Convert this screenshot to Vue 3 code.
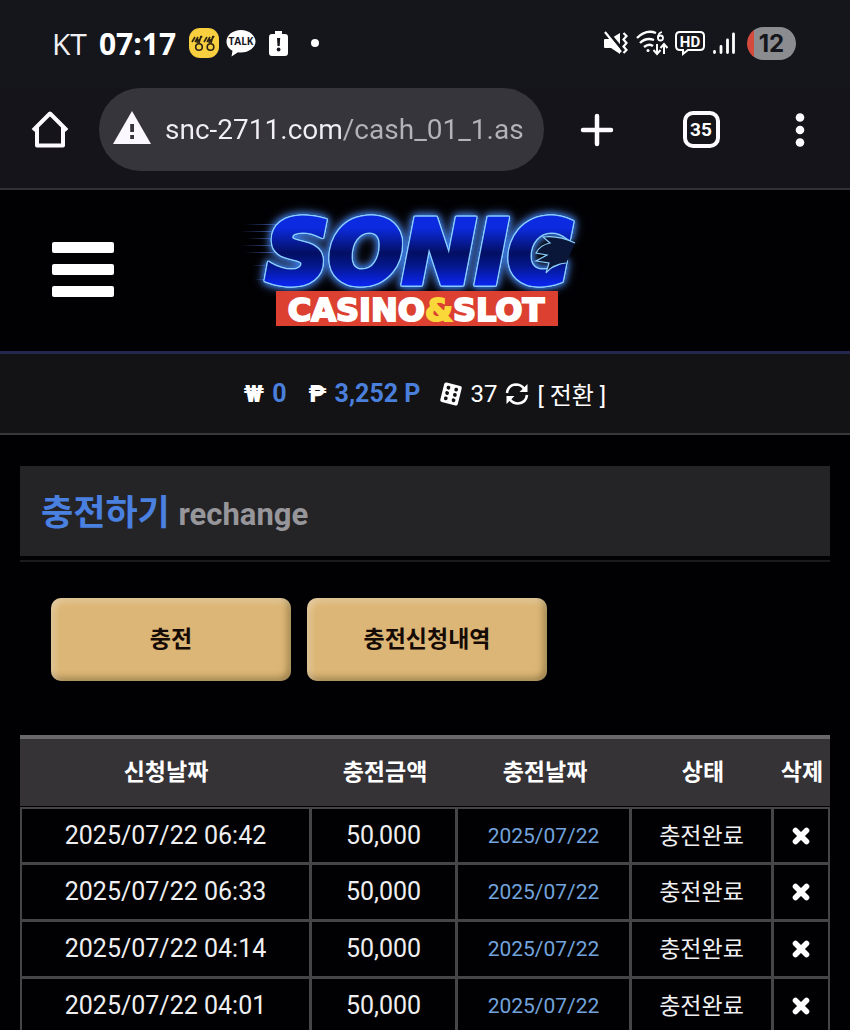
<template>
  <div class="phone">
    <div class="status-bar">
      <span class="carrier">KT</span>
      <span class="clock">07:17</span>
      <div class="status-icons">
        <svg width="30" height="30" viewBox="0 0 30 30">
          <rect width="30" height="30" rx="11" fill="#f8cf3e" />
          <g fill="none" stroke="#2b2414" stroke-width="1.6">
            <circle cx="10" cy="19" r="3.3" />
            <circle cx="21.500" cy="19" r="3.3" />
            <path d="M3 14l3-5M6 14l3-5M9 14l4-6M9 11l-1 4M15 14l3-5M18 14l3-5M21 14l4-6M21 11l-1 4M12 8l-2 7M24 8l-2 7" />
          </g>
        </svg>
        <svg width="30" height="30" viewBox="0 0 30 30">
          <path d="M15 2C7 2 .5 7 .5 13.500c0 4 2.300 7.300 6 9.300L5.500 28.500l6.500-4.200c1 .2 2 .2 3 .2 8 0 14.500-5 14.500-11S23 2 15 2z" fill="#fff" />
          <text x="15" y="17" text-anchor="middle" class="talk">TALK</text>
        </svg>
        <svg class="battery-alert" width="19" height="27" viewBox="0 0 19 27">
          <path d="M6 1h7v3h3q3 0 3 3v16q0 3-3 3H3q-3 0-3-3V7q0-3 3-3h3z" fill="#fff" />
          <path d="M8 8h3.200l-.5 8H8.500z" fill="#15161b" />
          <circle cx="9.600" cy="19.500" r="1.900" fill="#15161b" />
        </svg>
        <span class="dot"></span>
      </div>

      <div class="signal-icons">
        <svg width="26" height="28" viewBox="0 0 26 28">
          <path d="M2 10h5l10-6v21l-9-6H2q-1 0-1-1v-7q0-1 1-1z" fill="#fff" />
          <path d="M4 2l15 18" stroke="#15161b" stroke-width="3" />
          <path d="M2 3l16 20" stroke="#fff" stroke-width="2.200" />
          <path d="M20.500 4l3 3-3 3.500 3 3.500-3 3.500 3 3.500-3 3" fill="none" stroke="#fff" stroke-width="2.200" />
        </svg>
        <svg width="32" height="28" viewBox="0 0 32 28" fill="none" stroke="#fff" stroke-width="2.400">
          <path d="M1 9Q10 0 20 4M4 14q6-6 14-3M8 18q5-4 9-1" />
          <circle cx="12" cy="21.500" r="1.500" fill="#fff" stroke="none" />
          <path d="M21 15v9M17.500 21l3.500 4 3.500-4M28 25v-9M24.500 19l3.500-4 3.500 4" stroke-width="2" />
          <path d="M26 3q-4 1-4 6" stroke-width="1.800" />
          <circle cx="24.500" cy="9" r="2.500" stroke-width="1.800" />
        </svg>
        <svg width="30" height="28" viewBox="0 0 30 28">
          <path d="M5 3h20q4 0 4 4v10q0 4-4 4H13l-5 4v-4H5q-4 0-4-4V7q0-4 4-4z" fill="none" stroke="#fff" stroke-width="2" />
          <text x="15" y="18" text-anchor="middle" class="hd">HD</text>
        </svg>
        <svg width="24" height="28" viewBox="0 0 24 28" fill="none" stroke="#fff" stroke-width="2.800" stroke-linecap="round">
          <path d="M2.500 23.500v-1M9 23.500v-6M15.500 23.500V11M21.500 23.500V5" />
        </svg>
        <span class="battery">12</span>
      </div>
    </div>

    <div class="browser-bar">
      <button class="bar-btn" aria-label="홈">
        <svg width="40" height="40" viewBox="0 0 40 40" fill="none" stroke="#fdfbff" stroke-width="4" stroke-linejoin="round" stroke-linecap="square">
          <path d="M4.500 19L20 3.500 35.500 19M7 18v17.500h26V18" />
        </svg>
      </button>
      <div class="address">
        <svg width="38" height="34" viewBox="0 0 38 34">
          <path d="M19 0l19 33H0z" fill="#fbf8ff" />
          <path d="M17.200 13h3.800v8h-3.800zM17.200 24h3.800v4h-3.800z" fill="#36353b" />
        </svg>
        <input v-model="url" class="address-input" type="text" aria-label="주소" />
      </div>
      <button class="bar-btn add" aria-label="새 탭">
        <svg width="34" height="34" viewBox="0 0 34 34" stroke="#fdfbff" stroke-width="4.500" stroke-linecap="round">
          <path d="M3 17h28M17 3v28" />
        </svg>
      </button>
      <button class="bar-btn tabs"><span class="tab-count">35</span></button>
      <button class="bar-btn more" aria-label="메뉴">
        <svg width="10" height="34" viewBox="0 0 10 34" fill="#fdfbff">
          <circle cx="5" cy="4.500" r="4.300" />
          <circle cx="5" cy="17" r="4.300" />
          <circle cx="5" cy="29.500" r="4.300" />
        </svg>
      </button>
    </div>

    <header class="site-header">
      <button class="menu-btn" aria-label="전체 메뉴"><i></i><i></i><i></i></button>
      <a href="#" class="logo">
        <svg width="370" height="140" viewBox="10 0 370 140">
          <defs>
            <linearGradient id="neon" x1="0" y1="0" x2="0" y2="1">
              <stop offset="0.250" stop-color="#0c2be0" />
              <stop offset="0.500" stop-color="#030f63" />
              <stop offset="0.620" stop-color="#04178a" />
              <stop offset="0.800" stop-color="#0a24e8" />
            </linearGradient>
            <linearGradient id="trail">
              <stop offset="0" stop-color="#3c57a8" stop-opacity="0" />
              <stop offset="1" stop-color="#4f6fd0" />
            </linearGradient>
          </defs>
          <g fill="url(#trail)">
            <rect x="14" y="24" width="40" height="1" />
            <rect x="10" y="31" width="40" height="1" />
            <rect x="16" y="38" width="34" height="1" />
            <rect x="10" y="45" width="42" height="1" />
            <rect x="14" y="52" width="36" height="1" />
            <rect x="22" y="65" width="22" height="1" />
            <rect x="24" y="79" width="18" height="1" />
          </g>
          <g class="neon">
            <text x="36" y="83" class="sonic">SONIC</text>
          </g>
          <path d="M345 43Q328 35 313 37l7 6q-10 2-14 10l11 2-11 6 13 2-3 10q7-9 20-10z" fill="#0b1738" />
          <path d="M345 43Q328 35 313 37l7 6q-10 2-14 10l11 2-11 6 13 2-3 10q7-9 20-10" fill="none" stroke="#8ccfff" stroke-width="1.200" />
          <rect x="46" y="91" width="282" height="35" fill="#dc4030" />
          <text x="186" y="121" text-anchor="middle" class="casino">CASINO<tspan fill="#fbd83a" stroke="#fbd83a">&amp;</tspan>SLOT</text>
        </svg>
      </a>
    </header>

    <div class="wallet">
      <span class="sign">₩</span>
      <b class="money">0</b>
      <span class="sign peso">₱</span>
      <b class="money">3,252 P</b>
      <svg class="dice" width="22" height="24" viewBox="0 0 22 24">
        <g transform="rotate(14 11 12)">
          <rect x="2" y="2" width="18" height="20" rx="2" fill="#fff" />
          <g fill="#131215">
            <circle cx="7" cy="6.500" r="1.900" />
            <circle cx="7" cy="12" r="1.900" />
            <circle cx="7" cy="17.500" r="1.900" />
            <circle cx="15" cy="6.500" r="1.900" />
            <circle cx="15" cy="12" r="1.900" />
            <circle cx="15" cy="17.500" r="1.900" />
          </g>
        </g>
      </svg>
      <span>37</span>
      <svg class="refresh" width="24" height="24" viewBox="0 0 24 24">
        <path d="M2 11Q3 3 11 2.500q5 0 8 4M22 13q-1 8-9 8.500-5 0-8-4" fill="none" stroke="#fff" stroke-width="2.600" />
        <path d="M22.500 2v8h-8zM1.500 22v-8h8z" fill="#fff" />
      </svg>
      <a href="#" class="convert">[ 전환 ]</a>
    </div>

    <main class="content">
      <h1 class="title">충전하기 <small>rechange</small></h1>
      <div class="actions">
        <button class="gold-btn">충전</button>
        <button class="gold-btn">충전신청내역</button>
      </div>

      <table class="history">
        <colgroup>
          <col />
          <col class="c-amount" />
          <col class="c-date" />
          <col class="c-state" />
          <col class="c-del" />
        </colgroup>
        <thead>
          <tr>
            <th>신청날짜</th>
            <th>충전금액</th>
            <th>충전날짜</th>
            <th>상태</th>
            <th>삭제</th>
          </tr>
        </thead>
        <tbody>
          <tr v-for="row in rows" :key="row.requested">
            <td>{{ row.requested }}</td>
            <td>{{ row.amount }}</td>
            <td class="done-date">{{ row.charged }}</td>
            <td class="state">{{ row.state }}</td>
            <td>
              <button class="del-btn" aria-label="삭제" @click="removeRow(row)">
                <svg width="18" height="18" viewBox="0 0 18 18" stroke="#fff" stroke-width="5.600" stroke-linecap="round">
                  <path d="M3.500 3.500l11 11M14.500 3.500l-11 11" />
                </svg>
              </button>
            </td>
          </tr>
        </tbody>
      </table>
    </main>
  </div>
</template>

<script setup>
import { ref } from 'vue'

const url = ref('snc-2711.com/cash_01_1.as')

const rows = ref([
  { requested: '2025/07/22 06:42', amount: '50,000', charged: '2025/07/22', state: '충전완료' },
  { requested: '2025/07/22 06:33', amount: '50,000', charged: '2025/07/22', state: '충전완료' },
  { requested: '2025/07/22 04:14', amount: '50,000', charged: '2025/07/22', state: '충전완료' },
  { requested: '2025/07/22 04:01', amount: '50,000', charged: '2025/07/22', state: '충전완료' }
])

const removeRow = (row) => {
  rows.value = rows.value.filter((r) => r !== row)
}
</script>

<style>
body {
  background: #010103;
}
</style>

<style scoped>
.phone {
  min-height: 100vh;
  background: #010103;
  color: #fff;
  font-family: Roboto, 'Noto Sans CJK KR', sans-serif;
  font-size: 24px;
}

.phone * {
  box-sizing: border-box;
}

button {
  border: 0;
  padding: 0;
  background: none;
  color: inherit;
  font-family: inherit;
  cursor: pointer;
}

svg {
  display: block;
  flex: none;
}

/* 상태바 */
.status-bar {
  display: flex;
  align-items: center;
  height: 88px;
  padding: 0 54px 2px 52px;
  background: #15161b;
}

.carrier {
  font-family: 'Open Sans', sans-serif;
  font-size: 30px;
  color: #f0f0f4;
}

.clock {
  margin-left: 12px;
  font-family: 'Open Sans', sans-serif;
  font-size: 30px;
  font-weight: 700;
}

.status-icons {
  display: flex;
  align-items: center;
  gap: 7px;
  margin-left: 13px;
}

.talk {
  font: 700 10px 'Open Sans', sans-serif;
  fill: #15161b;
}

.battery-alert {
  margin-left: 6px;
}

.dot {
  width: 8px;
  height: 8px;
  margin-left: 16px;
  border-radius: 50%;
  background: #fff;
}

.signal-icons {
  display: flex;
  align-items: center;
  gap: 7px;
  margin-left: auto;
}

.hd {
  font: 700 15px Roboto, sans-serif;
  fill: #fff;
}

.battery {
  width: 49px;
  height: 33px;
  margin-left: 4px;
  border-radius: 17px;
  background: linear-gradient(90deg, #d44a3c 7px, #8b8c90 7px);
  color: #15161b;
  font-family: Inter, sans-serif;
  font-weight: 700;
  line-height: 33px;
  text-align: center;
}

/* 주소창 */
.browser-bar {
  display: flex;
  align-items: flex-start;
  height: 102px;
  padding: 0 30px;
  border-bottom: 2px solid #323137;
  background: #15141a;
}

.bar-btn {
  display: flex;
  flex: none;
  align-items: center;
  justify-content: center;
  width: 40px;
  height: 83px;
}

.address {
  display: flex;
  flex: 1;
  align-items: center;
  gap: 14px;
  min-width: 0;
  height: 83px;
  margin-left: 29px;
  padding: 0 12px 4px 14px;
  border-radius: 42px;
  background: #36353b;
}

.address-input {
  flex: 1;
  min-width: 0;
  border: 0;
  outline: 0;
  padding: 4px 0 0;
  background: linear-gradient(90deg, #f1eff5 178px, #b5b3ba 178px);
  -webkit-background-clip: text;
  background-clip: text;
  color: transparent;
  font-family: Roboto, sans-serif;
  font-size: 28px;
  line-height: 40px;
}

.add {
  margin-left: 33px;
}

.tabs {
  margin-left: 64px;
}

.more {
  margin-left: 59px;
}

.tab-count {
  width: 37px;
  height: 37px;
  border: 4px solid #fdfbff;
  border-radius: 10px;
  font-size: 19px;
  font-weight: 700;
  line-height: 29px;
}

/* 사이트 헤더 */
.site-header {
  display: grid;
  grid-template-columns: 1fr auto 1fr;
  align-items: center;
  height: 164px;
  padding: 0 20px 2px;
  border-bottom: 3px solid #23264f;
}

.menu-btn {
  display: flex;
  flex-direction: column;
  gap: 11px;
  width: 62px;
  margin-left: 32px;
}

.menu-btn i {
  height: 11px;
  border-radius: 2px;
  background: #fff;
}

/* 네온 테두리 + 번짐 */
.neon {
  filter: drop-shadow(1px 0 0 #8ccfff) drop-shadow(-1px 0 0 #8ccfff) drop-shadow(0 1px 0 #8ccfff)
    drop-shadow(0 -1px 0 #8ccfff) drop-shadow(0 0 3px #2f7bf5) drop-shadow(0 0 5px #4a6fb8);
}

.sonic {
  font: italic 700 87px 'DejaVu Sans', sans-serif;
  fill: url(#neon);
  stroke: url(#neon);
  stroke-width: 5px;
}

.casino {
  font: 700 32px 'DejaVu Sans', sans-serif;
  fill: #fff;
  stroke: #fff;
  stroke-width: 2px;
}

/* 보유금 */
.wallet {
  display: flex;
  align-items: center;
  justify-content: center;
  height: 81px;
  border-bottom: 2px solid #38383a;
  background: #131215;
}

.sign {
  font-weight: 900;
}

.money {
  margin-left: 8px;
  color: #4a80dc;
  font-size: 25px;
}

.peso {
  margin-left: 22px;
}

.dice {
  margin: 0 8px 0 20px;
}

.refresh {
  margin: 0 8px;
}

.convert {
  color: #fff;
  font-size: 24px;
  text-decoration: none;
}

/* 본문 */
.content {
  padding: 31px 20px 0;
}

.title {
  position: relative;
  height: 90px;
  margin: 0;
  padding: 0 21px;
  background: #242326;
  color: #4a80e0;
  font-size: 35px;
  font-weight: 700;
  line-height: 96px;
}

.title::after {
  content: '';
  position: absolute;
  left: 0;
  right: 0;
  bottom: -6px;
  height: 2px;
  background: #1b1a1d;
}

.title small {
  color: #97969a;
  font-size: 31px;
}

.actions {
  display: flex;
  gap: 16px;
  padding: 42px 31px 54px;
}

.gold-btn {
  width: 240px;
  height: 83px;
  padding-bottom: 5px;
  border-radius: 10px;
  background: #dcb676;
  box-shadow: inset 3px 3px 7px rgba(255, 255, 255, 0.35), inset -3px -3px 7px rgba(70, 60, 20, 0.45);
  color: #150a04;
  font-size: 23px;
  font-weight: 700;
}

.history {
  width: 100%;
  table-layout: fixed;
  border-collapse: separate;
  border-spacing: 0;
}

.c-amount {
  width: 146px;
}

.c-date {
  width: 174px;
}

.c-state {
  width: 142px;
}

.c-del {
  width: 56px;
}

.history th {
  height: 72px;
  padding: 0 0 5px;
  border-top: 4px solid #69686b;
  border-bottom: 1px solid #010103;
  background: #353336;
  font-size: 23px;
  font-weight: 700;
  white-space: nowrap;
}

.history td {
  height: 57px;
  padding: 0;
  border-right: 3px solid #454447;
  border-bottom: 3px solid #454447;
  color: #efeff1;
  font-size: 25px;
  line-height: 32px;
  text-align: center;
}

.history td:first-child {
  border-left: 2px solid #454447;
}

.history td:last-child {
  border-right-width: 2px;
}

.history tbody tr:first-child td {
  height: 58px;
  border-top: 2px solid #454447;
}

.history .done-date {
  color: #72a3dc;
  font-size: 21px;
}

.history .state {
  padding-top: 2px;
  font-size: 23px;
}

.del-btn {
  display: flex;
  justify-content: center;
  width: 100%;
}
</style>
